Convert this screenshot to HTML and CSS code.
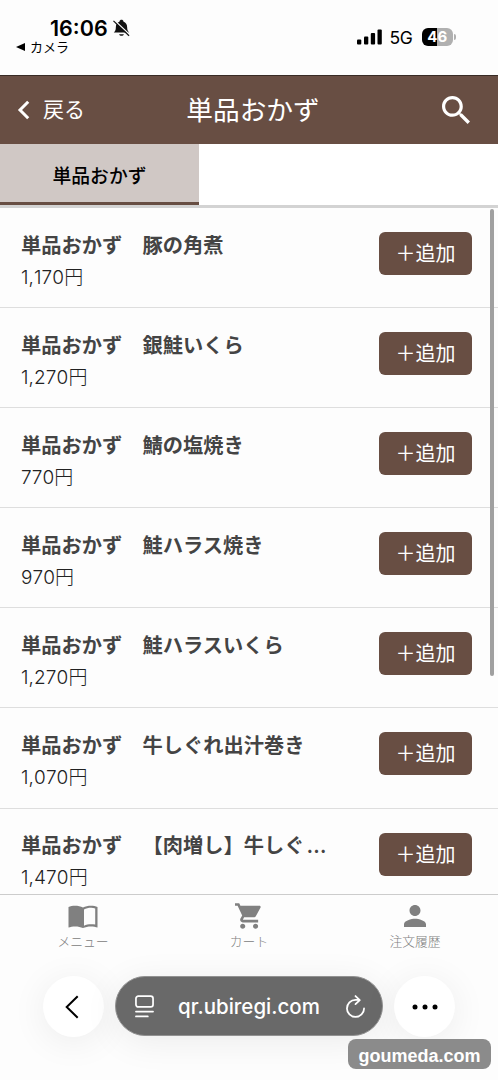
FILE: index.html
```html
<!DOCTYPE html>
<html lang="ja">
<head>
<meta charset="utf-8">
<meta name="viewport" content="width=device-width, initial-scale=1">
<title>単品おかず</title>
<link rel="stylesheet" href="styles.css">
</head>
<body>
<div class="screen">
  <div class="status">
    <div class="status-left">
      <div class="clock"><span class="time">16:06</span>
        <svg class="bell" viewBox="0 0 18 18"><path d="M.8 13.800C2.500 12.500 3 10.800 3 8.300 3 5 4.500 2.900 6.800 2.300 7.200-.3 10.800-.3 11.200 2.300 13.500 2.900 15 5 15 8.300c0 2.500.5 4.200 2.200 5.500zM6.500 15.500h5c-.5 2.400-4.500 2.400-5 0z" fill="#111"/><path d="M1.400.8 18 16.500" stroke="#fff" stroke-width="1.400"/><path d="M.5 1.500 17 17.200" stroke="#111" stroke-width="1.300"/></svg>
      </div>
      <div class="return"><svg class="tri" viewBox="0 0 9 8"><path d="M9 0v8L0 4z"/></svg>カメラ</div>
    </div>
    <div class="status-right">
      <svg class="signal" viewBox="0 0 25 16"><rect x="0" y="10.500" width="4.300" height="5" rx="1"/><rect x="7" y="7.500" width="4.300" height="8" rx="1"/><rect x="13.800" y="4" width="4.300" height="11.500" rx="1"/><rect x="20.500" y="0.500" width="4.300" height="15" rx="1"/></svg>
      <span class="net">5G</span>
      <span class="battery">46</span><span class="battery-tip"></span>
    </div>
  </div>
  <header class="header">
    <div class="back"><svg viewBox="0 0 13 20"><path d="M11.200 1.700 3 10l8.200 8.300" fill="none" stroke="#fff" stroke-width="3"/></svg>戻る</div>
    <h1 class="title">単品おかず</h1>
    <svg class="search" viewBox="3 3 17.500 17.500"><path fill="#fff" d="M15.500 14h-.79l-.28-.27C15.410 12.590 16 11.110 16 9.500 16 5.910 13.090 3 9.500 3S3 5.910 3 9.500 5.910 16 9.500 16c1.610 0 3.090-.59 4.230-1.570l.27.28v.79l5 4.990L20.490 19l-4.990-5zm-6 0C7.010 14 5 11.990 5 9.500S7.010 5 9.500 5 14 7.010 14 9.500 11.990 14 9.500 14z"/></svg>
  </header>
  <nav class="tabs"><div class="tab">単品おかず</div></nav>
  <main class="list">
    <div class="item"><div class="info"><div class="name">単品おかず　豚の角煮</div><div class="price">1,170<span class="yen">円</span></div></div><button class="add">＋追加</button></div>
    <div class="item"><div class="info"><div class="name">単品おかず　銀鮭いくら</div><div class="price">1,270<span class="yen">円</span></div></div><button class="add">＋追加</button></div>
    <div class="item"><div class="info"><div class="name">単品おかず　鯖の塩焼き</div><div class="price">770<span class="yen">円</span></div></div><button class="add">＋追加</button></div>
    <div class="item"><div class="info"><div class="name">単品おかず　鮭ハラス焼き</div><div class="price">970<span class="yen">円</span></div></div><button class="add">＋追加</button></div>
    <div class="item"><div class="info"><div class="name">単品おかず　鮭ハラスいくら</div><div class="price">1,270<span class="yen">円</span></div></div><button class="add">＋追加</button></div>
    <div class="item"><div class="info"><div class="name">単品おかず　牛しぐれ出汁巻き</div><div class="price">1,070<span class="yen">円</span></div></div><button class="add">＋追加</button></div>
    <div class="item"><div class="info"><div class="name">単品おかず　【肉増し】牛しぐ<span class="dots">…</span></div><div class="price">1,470<span class="yen">円</span></div></div><button class="add">＋追加</button></div>
    <div class="scrollbar"></div>
  </main>
  <nav class="bottom">
    <div class="dest"><svg class="book" viewBox="0 0 30 23"><path fill="#808080" d="M15 2.600C11 .4 4.500.2.500 2v20.500c4-1.600 10.500-1.500 14.500.5 4-2 10.500-2.100 14.500-.5V2C25.500.2 19 .4 15 2.600zm12.200 17c-3.500-.8-8.200-.5-11.200 1.100V4.500c3-1.700 7.700-2.100 11.200-1.100z"/></svg><span>メニュー</span></div>
    <div class="dest"><svg class="cart" viewBox="1 2 21 20"><path fill="#808080" d="M7 18c-1.100 0-1.990.9-1.990 2S5.900 22 7 22s2-.9 2-2-.9-2-2-2zM1 2v2h2l3.600 7.590-1.350 2.450c-.16.28-.25.61-.25.96 0 1.100.9 2 2 2h12v-2H7.420c-.14 0-.25-.11-.25-.25l.03-.12.900-1.630h7.450c.75 0 1.410-.41 1.750-1.030l3.580-6.490c.08-.14.120-.31.120-.48 0-.55-.45-1-1-1H5.210l-.94-2H1zm16 16c-1.100 0-1.990.9-1.990 2s.89 2 1.990 2 2-.9 2-2-.9-2-2-2z"/></svg><span>カート</span></div>
    <div class="dest"><svg class="person" viewBox="4 4 16 16"><path fill="#808080" d="M12 12c2.210 0 4-1.790 4-4s-1.790-4-4-4-4 1.790-4 4 1.790 4 4 4zm0 2c-2.670 0-8 1.340-8 4v2h16v-2c0-2.660-5.330-4-8-4z"/></svg><span>注文履歴</span></div>
  </nav>
  <footer class="browser">
    <div class="round"><svg class="chev" viewBox="0 0 14 24"><path d="M12.700 1.200 1.700 12l11 10.800" fill="none" stroke="#000" stroke-width="2"/></svg></div>
    <div class="address">
      <svg class="page" viewBox="0 0 20 24" fill="none" stroke="#fff" stroke-width="1.800" stroke-linecap="round"><rect x="1" y="1" width="18" height="11.500" rx="2.500"/><path d="M1 17.300h18M1 22.500h12.500"/></svg>
      <span class="url">qr.ubiregi.com</span>
      <svg class="reload" viewBox="0 0 20 24" fill="none" stroke="#fff" stroke-width="1.900" stroke-linecap="round" stroke-linejoin="round"><path d="M19 14a9 9 0 1 1-9-9h4M10 1l4.500 4.200L10 9.500"/></svg>
    </div>
    <div class="round"><svg class="more" viewBox="0 0 26 6"><circle cx="3" cy="3" r="2.500"/><circle cx="13" cy="3" r="2.500"/><circle cx="23" cy="3" r="2.500"/></svg></div>
  </footer>
  <div class="watermark">goumeda.com</div>
</div>
</body>
</html>
```
FILE: styles.css
```css
* { box-sizing: border-box; }
body {
  margin: 0;
  background: #fdfdfd;
  font-family: Inter, "Noto Sans CJK JP", sans-serif;
  color: #000;
}
.screen {
  position: relative;
  width: 498px;
  height: 1080px;
  overflow: hidden;
  display: flex;
  flex-direction: column;
}
svg { display: block; flex: none; overflow: visible; }

.status { height: 75px; flex: none; display: flex; justify-content: space-between; padding: 16px 42px 0 16px; }
.clock { display: flex; align-items: center; height: 24px; padding-left: 34px; }
.time { width: 59px; font-size: 21.500px; font-weight: 600; letter-spacing: 0; white-space: nowrap; }
.bell { width: 17px; height: 18px; margin-left: 4px; }
.return { display: flex; align-items: center; height: 14px; font-size: 13px; line-height: 14px; }
.tri { width: 9px; height: 8px; margin-right: 5px; }
.status-right { display: flex; align-items: center; height: 20px; margin-top: 11px; }
.signal { width: 25px; height: 16px; }
.net { width: 40px; padding-left: 8px; font-size: 17.500px; letter-spacing: -0.300px; }
.battery {
  width: 31.500px; height: 18px; border-radius: 6px;
  background: linear-gradient(90deg, #000 0 47%, #b0b0b0 47%);
  color: #fff; font-size: 15px; font-weight: 700; line-height: 18px; text-align: center;
}
.battery-tip { width: 2px; height: 6px; margin-left: 1px; border-radius: 0 2px 2px 0; background: #b0b0b0; }

.header {
  height: 69px; flex: none; display: grid; grid-template-columns: 1fr auto 1fr; align-items: center;
  padding: 0 28px 0 17px; background: #684e43; border-top: 1px solid #382b25; color: #fff;
}
.back { display: flex; align-items: center; gap: 13px; font-size: 21px; line-height: 30px; }
.back svg { width: 13px; height: 20px; }
.title { margin: 0; padding-left: 19px; font-size: 26.700px; line-height: 38px; font-weight: 400; }
.search { width: 28px; height: 28px; justify-self: end; }

.tabs { height: 64px; flex: none; border-bottom: 3px solid #d3d3d3; background: #fff; }
.tab {
  width: 199px; height: 61px; background: #d0c8c5; border-bottom: 3px solid #684e43;
  font-size: 18.800px; font-weight: 500; line-height: 65px; text-align: center;
}

.list { position: relative; height: 686px; flex: none; overflow: hidden; }
.item {
  height: 100.100px; display: flex; justify-content: space-between; align-items: flex-start;
  padding: 20.600px 26px 0 21px; border-bottom: 1.500px solid #dedede;
}
.name {
  height: 34px; font-size: 20.250px; line-height: 34px; font-weight: 700; color: #444;
  white-space: nowrap; text-spacing-trim: space-all;
}
.dots { margin-left: 2px; font: 500 22px/1 Inter, sans-serif; }
.price {
  height: 30px; font-size: 19px; line-height: 30px; font-weight: 300; color: #222; white-space: nowrap;
  font-kerning: none; letter-spacing: 0.100px;
}
.add {
  display: block; width: 93px; height: 43px; margin-top: 3.400px; padding: 0 0 2px; border: 0; border-radius: 6px;
  background: #684e43; color: #fff; font: 400 20px/41px "Noto Sans CJK JP", sans-serif;
}
.scrollbar { position: absolute; top: 1px; right: 4px; width: 4px; height: 467px; border-radius: 2px; background: #a0a0a0; }

.bottom { height: 62px; flex: none; display: grid; grid-template-columns: repeat(3, 1fr); border-top: 1px solid #ccc; }
.dest {
  display: flex; flex-direction: column; align-items: center; justify-content: space-between;
  height: 57px; padding: 8px 0 0; color: #808080; font-size: 12.800px; line-height: 20px; font-weight: 300;
}
.book { width: 30px; height: 23px; margin-top: 2px; }
.cart { width: 27px; height: 26px; margin-right: 2px; }
.person { width: 22px; height: 22px; margin-top: 2px; }

.browser { height: 124px; flex: none; display: flex; align-items: flex-start; gap: 11px; padding: 20px 43px 0; }
.round {
  width: 61px; height: 61px; flex: none; display: flex; align-items: center; justify-content: center;
  border-radius: 50%; background: #fff; box-shadow: 0 5px 36px rgba(0, 0, 0, .07);
}
.chev { width: 14px; height: 24px; margin-right: 4px; }
.more { width: 26px; height: 6px; }
.address {
  flex: 1; height: 60px; display: flex; align-items: center; padding: 0 17px 0 19px;
  border: 1px solid #929292; border-radius: 30px; background: #696969; color: #fff;
  box-shadow: 0 6px 36px rgba(0, 0, 0, .07);
}
.page { width: 19px; height: 23px; }
.url { flex: 1; text-align: center; font-size: 20.500px; font-weight: 500; padding-right: 2px; }
.reload { width: 19px; height: 23px; }
.watermark {
  position: absolute; left: 348px; top: 1039px; width: 143px; height: 30px; border-radius: 8px;
  background: #8b8b8b; color: #fff; font: 700 18px/34px "Liberation Sans", sans-serif; text-align: center;
}
```
